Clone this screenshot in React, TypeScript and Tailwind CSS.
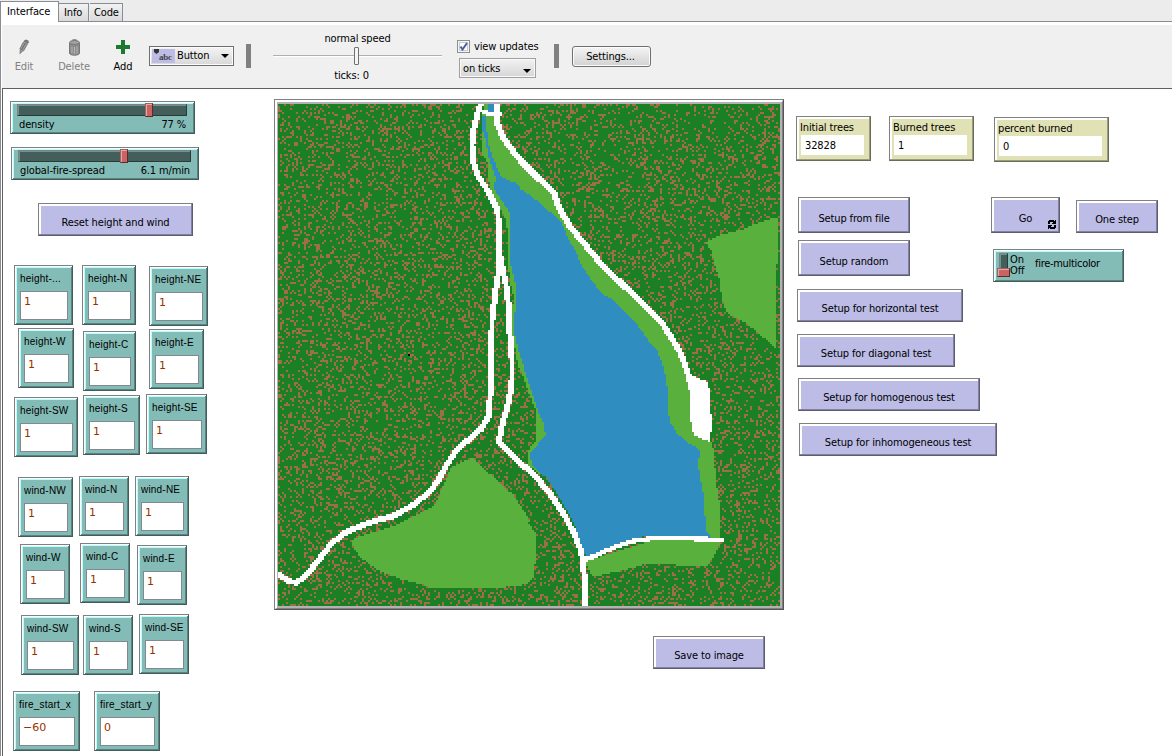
import React, { useMemo } from "react";

const UI = "font-['DejaVu_Sans_Condensed','DejaVu_Sans',sans-serif] text-[11px] leading-[14px] tracking-[-0.13px] whitespace-nowrap";

/* ---------- terrain ---------- */

type Pt = [number, number];
const SIZE = 251;

// Shapes are written on four overlapping sheets, six units to a patch.
const sheet = (ox: number, oy: number) => (...v: number[]): Pt[] => {
  const out: Pt[] = [];
  for (let i = 0; i < v.length; i += 2) out.push([(v[i] / 3 + ox) / 2, (v[i + 1] / 3 + oy) / 2]);
  return out;
};
const nw = sheet(-8, -9);
const ne = sheet(242, -9);
const sw = sheet(-8, 246);
const se = sheet(242, 246);

const GRASS: Pt[][] = [
  [
    ...nw(636, 60, 638, 100, 636, 180, 652, 200, 656, 250, 660, 285, 690, 335, 705, 370, 713, 410, 714, 510, 722, 570, 730, 600, 728, 650, 726, 720, 738, 770),
    ...se(-8, 40, 5, 70, 20, 110, 38, 160, 48, 180, 48, 270, 25, 300, 25, 345, 50, 366, 80, 380, 104, 410, 146, 480, 170, 530, 196, 605, 215, 612, 300, 576, 372, 557, 430, 552, 465, 552, 560, 558, 600, 570, 600, 465, 594, 430, 588, 400, 582, 310, 575, 275, 520, 240, 510, 75, 483, 0),
    ...ne(455, 730, 380, 640, 250, 515, 150, 395, 118, 340, 100, 290, 50, 245, 0, 195),
    ...nw(740, 175, 700, 130, 680, 80, 672, 60),
  ],
  se(195, 635, 400, 570, 600, 572, 600, 582, 565, 648, 480, 648, 460, 642, 380, 642, 320, 658, 235, 677, 215, 675),
  [
    ...sw(545, 350, 580, 335, 610, 322, 625, 340, 680, 390, 730, 435, 760, 480, 780, 515),
    ...se(25, 520, 45, 545, 48, 600, 42, 680, 20, 700, 0, 707),
    ...sw(740, 708, 690, 713, 480, 713, 460, 705, 400, 690, 340, 668, 300, 645, 270, 620, 250, 595, 246, 570, 280, 555, 360, 532, 430, 500, 490, 470, 510, 430, 525, 395),
  ],
  ne(757, 369, 774, 369, 774, 507, 768, 507, 768, 760, 745, 740, 680, 685, 622, 655, 605, 610, 600, 560, 585, 510, 575, 470, 557, 440, 600, 420, 670, 402, 710, 385),
  nw(642, 24, 654, 24, 654, 45, 642, 45),
];

const WATER: Pt[][] = [
  [
    ...nw(638, 63, 636, 100, 645, 130, 655, 180, 668, 220, 678, 250, 671, 280, 690, 310, 717, 350, 720, 400, 720, 500, 735, 560, 738, 600, 738, 640, 733, 660, 735, 720, 748, 775),
    ...se(0, 15, 20, 80, 40, 140, 60, 200, 72, 225, 76, 255, 60, 275, 30, 310, 35, 345, 80, 385, 110, 430, 140, 480, 165, 530, 190, 612, 205, 620, 250, 602, 310, 575, 370, 560, 550, 560, 575, 566, 560, 545, 553, 480, 550, 430, 540, 380, 535, 345, 540, 300, 500, 275, 470, 250, 450, 215, 444, 180, 443, 120, 435, 70, 425, 35, 410, 0),
    ...ne(390, 745, 365, 705, 320, 655, 275, 610, 245, 595, 215, 555, 185, 510, 165, 465, 145, 430, 125, 385, 95, 355, 55, 320, 0, 280),
    ...nw(745, 268, 715, 255, 692, 245, 680, 215, 670, 190, 655, 150, 650, 100, 648, 63),
  ],
  nw(654, 24, 672, 24, 672, 52, 654, 52),
];

const CLEARING: Pt[] = se(505, 72, 563, 95, 570, 130, 570, 190, 576, 195, 575, 230, 570, 275, 555, 270, 525, 255, 515, 235, 510, 190, 510, 135, 500, 90);

const ROADS: { r: number; p: Pt[] }[] = [
  {
    r: 1.45,
    p: [
      ...nw(634, 20, 625, 50, 612, 100, 606, 150, 610, 200, 625, 245, 655, 290, 683, 345, 686, 400, 689, 520, 682, 550, 674, 610, 666, 680, 665, 760),
      ...sw(663, 20, 660, 150, 655, 200, 635, 235, 600, 265, 560, 300, 530, 345, 508, 385, 480, 425, 430, 465, 370, 498, 300, 517, 230, 545, 185, 580, 150, 625, 110, 675, 80, 698, 58, 694, 20, 670),
    ],
  },
  {
    r: 1.45,
    p: [
      ...nw(689, 480, 700, 530, 710, 580, 716, 640, 717, 700, 724, 750),
      ...sw(726, 30, 726, 90, 722, 120, 710, 180, 695, 230, 687, 275, 720, 310),
      ...se(0, 338, 40, 372, 90, 430, 130, 490, 165, 555, 185, 610, 191, 660, 195, 700, 195, 790),
    ],
  },
  {
    r: 1.5,
    p: [
      ...nw(681, 20, 680, 80, 700, 130, 735, 175),
      ...ne(0, 195, 50, 245, 100, 290, 118, 340, 150, 395, 200, 455, 250, 515, 320, 580, 380, 640, 430, 690, 455, 730, 480, 770),
      ...se(497, 50, 508, 85),
    ],
  },
  { r: 1.1, p: nw(622, 42, 655, 56, 688, 58) },
  { r: 1.15, p: se(192, 632, 250, 605, 310, 582, 350, 571, 400, 565, 520, 566, 608, 570) },
];

function inside(x: number, y: number, p: Pt[]) {
  let hit = false;
  for (let i = 0, j = p.length - 1; i < p.length; j = i++) {
    if (p[i][1] > y !== p[j][1] > y && x < ((p[j][0] - p[i][0]) * (y - p[i][1])) / (p[j][1] - p[i][1]) + p[i][0]) hit = !hit;
  }
  return hit;
}

function near(x: number, y: number, p: Pt[], r: number) {
  for (let i = 1; i < p.length; i++) {
    const [ax, ay] = p[i - 1];
    const dx = p[i][0] - ax;
    const dy = p[i][1] - ay;
    const t = Math.max(0, Math.min(1, ((x - ax) * dx + (y - ay) * dy) / (dx * dx + dy * dy || 1)));
    if ((x - ax - t * dx) ** 2 + (y - ay - t * dy) ** 2 < r * r) return true;
  }
  return false;
}

const PALETTE = ["#1b7f23", "#9d6e48", "#59b03c", "#2f8dbf", "#ffffff"];

function buildTerrain() {
  const paths = PALETTE.map(() => "");
  let seed = 90210;
  const rand = () => {
    seed = (seed + 0x6d2b79f5) | 0;
    let t = Math.imul(seed ^ (seed >>> 15), 1 | seed);
    t = (t + Math.imul(t ^ (t >>> 7), 61 | t)) ^ t;
    return ((t ^ (t >>> 14)) >>> 0) / 4294967296;
  };
  for (let row = 0; row < SIZE; row++) {
    let start = 0;
    let prev = -1;
    for (let col = 0; col <= SIZE; col++) {
      let kind = -2;
      if (col < SIZE) {
        const x = col + 0.5;
        const y = row + 0.5;
        kind = rand() < 0.215 ? 1 : 0;
        if (ROADS.some((o) => near(x, y, o.p, o.r)) || inside(x, y, CLEARING)) kind = 4;
        else if (WATER.some((p) => inside(x, y, p))) kind = 3;
        else if (GRASS.some((p) => inside(x, y, p))) kind = 2;
      }
      if (kind !== prev) {
        if (prev > 0) paths[prev] += `M${start} ${row}h${col - start}v1h${start - col}z`;
        start = col;
        prev = kind;
      }
    }
  }
  return paths;
}

function World() {
  const paths = useMemo(buildTerrain, []);
  return (
    <svg width="502" height="502" viewBox="0 0 251 251" shapeRendering="crispEdges" className="block">
      <rect width="251" height="251" fill={PALETTE[0]} />
      {paths.map((d, i) => (d ? <path key={i} d={d} fill={PALETTE[i]} /> : null))}
      <rect x="65" y="125" width="1" height="1" fill="#000" />
    </svg>
  );
}

/* ---------- widgets ---------- */

const TEAL =
  "shrink-0 bg-[#83bbb6] border border-t-[#808080] border-l-[#808080] border-r-[#415c59] border-b-[#415c59] shadow-[inset_1px_1px_0_#fff,inset_-1px_-1px_0_#5a827e,inset_2px_2px_0_#b4ffff]";
const LILAC =
  "shrink-0 bg-[#bcbce6] border border-t-[#808080] border-l-[#808080] border-r-[#5c5c72] border-b-[#5c5c72] shadow-[inset_-1px_-1px_0_#8282a0,inset_2px_2px_0_#fff]";
const KHAKI =
  "shrink-0 bg-[#e0e1b4] border border-t-[#808080] border-l-[#808080] border-r-[#6c6c56] border-b-[#6c6c56] shadow-[inset_-1px_-1px_0_#9c9c7e,inset_2px_2px_0_#fff]";

function Btn({ at, children }: { at: string; children: React.ReactNode }) {
  return <button className={`${LILAC} ${UI} ${at} relative flex items-center justify-center pt-[7px] text-black`}>{children}</button>;
}

function Input({ at, label, value = "1" }: { at: string; label: string; value?: string }) {
  return (
    <div className={`${TEAL} ${at} flex h-[60px] flex-col pl-[5px] pr-1`}>
      <div className="mt-[7px] h-3 whitespace-nowrap font-['Liberation_Sans',sans-serif] text-[10px] leading-3 tracking-[0.2px] text-black">{label}</div>
      <div className="mt-[6px] h-[29px] border border-[#828790] bg-white pl-[3px] pt-[3px] font-['DejaVu_Sans',sans-serif] text-[11px] leading-[14px] text-[#963200]">{value}</div>
    </div>
  );
}

function Slider({ at, label, value, thumb }: { at: string; label: string; value: string; thumb: string }) {
  return (
    <div className={`${TEAL} ${UI} ${at} flex h-[33px] flex-col text-black`}>
      <div className="relative ml-[6px] mr-[7px] mt-[2px] h-3 border border-b-[#2a3a38] border-l-[#808080] border-r-[#2a3a38] border-t-[#808080] bg-[#445e5b] shadow-[inset_1px_1px_0_#6c9590]">
        <div className={`absolute -top-[2px] h-[14px] w-2 border border-b-[#5e2a2a] border-l-[#8a6a6a] border-r-[#5e2a2a] border-t-[#8a6a6a] bg-[#c86464] shadow-[inset_1px_1px_0_#ff9c9c] ${thumb}`} />
      </div>
      <div className="mt-[2px] flex justify-between pl-2 pr-2">
        <span>{label}</span>
        <span>{value}</span>
      </div>
    </div>
  );
}

function Monitor({ at, label, value }: { at: string; label: string; value: string }) {
  return (
    <div className={`${KHAKI} ${UI} ${at} flex h-[45px] flex-col pl-1 pr-[6px] text-black`}>
      <div className="mt-1 -ml-px h-[14px]">{label}</div>
      <div className="h-5 bg-white pl-1 pt-1">{value}</div>
    </div>
  );
}

/* ---------- toolbar ---------- */

function Pencil() {
  return (
    <svg width="12" height="17" viewBox="0 0 12 17" className="block">
      <path d="M6 1.5 8 .5l2.500 1 .3 2-1 1.500L5.500 2.800z" fill="#777" />
      <path d="M5.200 3.300 9.300 5.300 5.500 12 1.800 10z" fill="#999" stroke="#707070" strokeWidth=".8" />
      <path d="M7 4.500 3.500 11" stroke="#6a6a6a" strokeWidth="1" />
      <path d="M1.700 10.500 5 12.300 1.500 15.500z" fill="#888" />
    </svg>
  );
}

function Trash() {
  return (
    <svg width="13" height="17" viewBox="0 0 13 17" className="block">
      <path d="M4.500 1h4" stroke="#777" strokeWidth="1.500" />
      <path d="M1.500 4v10c0 3 10 3 10 0V4z" fill="#8c8c8c" stroke="#777" />
      <ellipse cx="6.500" cy="3.500" rx="5" ry="2" fill="#a2a2a2" stroke="#777" />
      <path d="M4 7.500v7M6.500 8v7M9 7.500v7" stroke="#b4b4b4" />
    </svg>
  );
}

function Arrow() {
  return (
    <svg width="8" height="4" viewBox="0 0 8 4" className="block">
      <path d="M0 0h8L4 4z" fill="#000" />
    </svg>
  );
}

function Tool({ at, label, children }: { at: string; label: string; children: React.ReactNode }) {
  return (
    <div className={`flex shrink-0 flex-col items-center pt-[14px] ${UI} ${at}`}>
      <div className="flex h-[19px] items-start justify-center">{children}</div>
      <span className="mt-[2px]">{label}</span>
    </div>
  );
}

function Toolbar() {
  return (
    <div className="ml-px flex h-[63px] shrink-0 items-start bg-[#f0f0f0] text-black">
      <Tool at="ml-[2px] w-10 text-[#808080]" label="Edit"><Pencil /></Tool>
      <Tool at="ml-[10px] w-10 text-[#808080]" label="Delete"><Trash /></Tool>
      <Tool at="ml-[9px] w-10" label="Add">
        <svg width="14" height="14" viewBox="0 0 14 14" className="mt-px block"><path d="M5 0h4v5h5v4H9v5H5V9H0V5h5z" fill="#1b7a30" /></svg>
      </Tool>
      <div className={`ml-[6px] mt-[21px] flex h-5 w-[85px] shrink-0 items-center border border-[#707070] bg-gradient-to-b from-[#f4f4f4] to-[#d8d8d8] pl-[2px] shadow-[inset_0_0_0_1px_#fbfbfb] ${UI}`}>
        <span className="flex h-[14px] w-[23px] items-end justify-end bg-[#bcbce6] pr-[3px] font-['Liberation_Serif',serif] text-[9px] font-bold leading-[11px] text-[#444]">
          <svg width="5" height="5" viewBox="0 0 5 5" className="mb-[9px]"><path d="M0 0h5v3L2.500 5 0 3z" fill="#333" /></svg>abc
        </span>
        <span className="ml-[2px] flex-1">Button</span>
        <span className="mr-[4px]"><Arrow /></span>
      </div>
      <div className="ml-3 mt-[19px] h-6 w-[5px] shrink-0 bg-[#808080]" />
      <div className={`ml-[22px] flex w-[169px] shrink-0 flex-col items-center pt-[7px] ${UI}`}>
        <span>normal speed</span>
        <div className="mt-px flex h-[18px] w-full items-center justify-center">
          <div className="h-[2px] w-[81px] border-b border-white bg-[#b0b0b0]" />
          <div className="h-[18px] w-[5px] rounded-[1px] border border-[#707070] bg-[#f4f4f4]" />
          <div className="h-[2px] w-[83px] border-b border-white bg-[#b0b0b0]" />
        </div>
        <span className="mr-3 mt-[4px]">ticks: 0</span>
      </div>
      <div className={`ml-[15px] flex w-[82px] shrink-0 flex-col ${UI}`}>
        <div className="mt-[15px] flex h-[13px] items-center">
          <span className="flex h-[13px] w-[13px] items-center justify-center border border-[#8e8f8f] bg-white shadow-[inset_0_0_0_1px_#f4f4f4,inset_0_0_0_2px_#c8ccd4]">
            <svg width="9" height="9" viewBox="0 0 9 9"><path d="M1.500 4.500 3.500 7.500 8 1" fill="none" stroke="#4a5f9c" strokeWidth="2" /></svg>
          </span>
          <span className="ml-1">view updates</span>
        </div>
        <div className="ml-[2px] mt-[5px] flex h-5 w-[77px] items-center border border-[#a0a0a0] bg-gradient-to-b from-[#f2f2f2] to-[#d6d6d6] pl-[3px] shadow-[inset_0_0_0_1px_#f8f8f8]">
          <span className="flex-1 pt-px">on ticks</span>
          <span className="mr-[4px] mt-[5px]"><Arrow /></span>
        </div>
      </div>
      <div className="ml-[15px] mt-[19px] h-6 w-[5px] shrink-0 bg-[#808080]" />
      <button className={`ml-[13px] mt-[21px] h-[21px] w-[79px] shrink-0 rounded-[3px] border border-[#707070] bg-gradient-to-b from-[#f4f4f4] to-[#d2d2d2] pr-[2px] shadow-[inset_0_0_0_1px_#fbfbfb] ${UI}`}>Settings...</button>
    </div>
  );
}

function Tabs() {
  return (
    <div className={`flex h-[22px] shrink-0 items-end bg-[#ececec] text-black ${UI}`}>
      <div className="z-10 h-[21px] w-[59px] shrink-0 border border-b-0 border-[#898c95] bg-white pl-[6px] pt-[3px]">Interface</div>
      <div className="flex h-[19px] flex-1 border-b border-[#898c95]">
        <div className="w-[30px] border border-b-0 border-l-0 border-[#898c95] bg-gradient-to-b from-[#f2f2f2] to-[#dadada] pl-[5px] pt-[2px]">Info</div>
        <div className="ml-px w-[33px] border border-b-0 border-l-0 border-[#898c95] bg-gradient-to-b from-[#f2f2f2] to-[#dadada] pl-1 pt-[2px]">Code</div>
      </div>
    </div>
  );
}

function LeftPanel() {
  return (
    <div className="w-[271px] shrink-0 pt-3">
      <Slider at="ml-[7px] w-[185px]" label="density" value="77 %" thumb="left-[127px]" />
      <Slider at="ml-2 mt-[13px] w-[188px]" label="global-fire-spread" value="6.1 m/min" thumb="left-[101px]" />
      <Btn at="ml-[35px] mt-[23px] h-[33px] w-[155px]">Reset height and wind</Btn>
      <div className="mt-[29px] flex h-[63px] items-start">
        <Input at="ml-[11px] w-[59px]" label="height-..." />
        <Input at="ml-[9px] w-[54px]" label="height-N" />
        <Input at="ml-[13px] mt-px w-[59px]" label="height-NE" />
      </div>
      <div className="flex h-[66px] items-start">
        <Input at="ml-[15px] w-[56px]" label="height-W" />
        <Input at="ml-[9px] mt-[3px] w-[53px]" label="height-C" />
        <Input at="ml-[13px] mt-px w-[55px]" label="height-E" />
      </div>
      <div className="flex h-[82px] items-start">
        <Input at="ml-[11px] mt-[3px] w-[64px]" label="height-SW" />
        <Input at="ml-[5px] mt-px w-[57px]" label="height-S" />
        <Input at="ml-[6px] w-[61px]" label="height-SE" />
      </div>
      <div className="flex h-[67px] items-start">
        <Input at="ml-[15px] mt-px w-[55px]" label="wind-NW" />
        <Input at="ml-[6px] w-[50px]" label="wind-N" />
        <Input at="ml-[6px] w-[54px]" label="wind-NE" />
      </div>
      <div className="flex h-[71px] items-start">
        <Input at="ml-[17px] mt-px w-[50px]" label="wind-W" />
        <Input at="ml-[10px] w-[50px]" label="wind-C" />
        <Input at="ml-[7px] mt-[2px] w-[50px]" label="wind-E" />
      </div>
      <div className="flex h-[77px] items-start">
        <Input at="ml-[18px] mt-px w-[58px]" label="wind-SW" />
        <Input at="ml-[4px] mt-px w-[50px]" label="wind-S" />
        <Input at="ml-[6px] w-[50px]" label="wind-SE" />
      </div>
      <div className="flex items-start">
        <Input at="ml-[10px] w-[67px]" label="fire_start_x" value="−60" />
        <Input at="ml-[14px] w-[66px]" label="fire_start_y" value="0" />
      </div>
    </div>
  );
}

function CenterPanel() {
  return (
    <div className="w-[510px] shrink-0 pt-[10px]">
      <div className="h-[511px] border border-b-[#555] border-l-[#808080] border-r-[#555] border-t-[#808080]">
        <div className="h-full border-b border-l-2 border-r border-t-2 border-b-[#808080] border-l-white border-r-[#808080] border-t-white">
          <div className="h-full border-b-2 border-l border-r-2 border-t-2 border-[#b2b2b2]">
            <World />
          </div>
        </div>
      </div>
      <Btn at="ml-[379px] mt-[26px] h-[33px] w-[112px]">Save to image</Btn>
    </div>
  );
}

function RightPanel() {
  return (
    <div className="flex-1 pt-[27px]">
      <div className="flex h-[46px] items-start">
        <Monitor at="ml-3 w-[75px]" label="Initial trees" value="32828" />
        <Monitor at="ml-[18px] w-[85px]" label="Burned trees" value="1" />
        <Monitor at="ml-5 mt-px w-[115px]" label="percent burned" value="0" />
      </div>
      <div className="flex items-start pt-[35px]">
        <div className="w-[207px] shrink-0">
          <Btn at="ml-[14px] h-9 w-[112px]">Setup from file</Btn>
          <Btn at="ml-[14px] mt-[7px] h-9 w-[112px]">Setup random</Btn>
          <Btn at="ml-[13px] mt-[13px] h-[33px] w-[166px]">Setup for horizontal test</Btn>
          <Btn at="ml-[13px] mt-3 h-[33px] w-[158px]">Setup for diagonal test</Btn>
          <Btn at="ml-[14px] mt-[11px] h-[33px] w-[182px]">Setup for homogenous test</Btn>
          <Btn at="ml-[15px] mt-3 h-[33px] w-[198px]">Setup for inhomogeneous test</Btn>
        </div>
        <div className="shrink-0">
          <div className="flex items-start">
            <Btn at="h-9 w-[69px]">
              Go
              <svg width="8" height="9" viewBox="0 0 8 9" shapeRendering="crispEdges" className="absolute bottom-[3px] right-[3px]">
                <path d="M1 0h5v1h1V0h1v4H4V3h1V2H2v2H0V1h1zM7 9H2V8H1v1H0V5h4v1H3v1h3V5h2v3H7z" fill="#000" />
              </svg>
            </Btn>
            <Btn at="ml-4 mt-[3px] h-[33px] w-[82px]">One step</Btn>
          </div>
          <div className={`${TEAL} ${UI} ml-[2px] mt-4 flex h-[33px] w-[131px] items-start text-black`}>
            <div className="ml-[3px] mt-[3px] flex w-[13px] flex-col items-center">
              <div className="h-[15px] w-[9px] border border-b-0 border-l-[#808080] border-r-[#2a3a38] border-t-[#808080] bg-[#445e5b] shadow-[inset_1px_1px_0_#6c9590]" />
              <div className="h-[9px] w-[13px] border border-b-[#5e2a2a] border-l-[#8a6a6a] border-r-[#5e2a2a] border-t-[#8a6a6a] bg-[#c86464] shadow-[inset_1px_1px_0_#ff9c9c]" />
            </div>
            <div className="mt-[4px] w-[25px] leading-[11px]">On<br />Off</div>
            <div className="mt-[7px] tracking-[-0.3px]">fire-multicolor</div>
          </div>
        </div>
      </div>
    </div>
  );
}

export default function App() {
  return (
    <div className="flex h-[756px] w-[1172px] flex-col overflow-hidden bg-white">
      <Tabs />
      <div className="flex flex-1 flex-col border-l border-[#898c95] pt-[3px]">
        <Toolbar />
        <div className="ml-px flex flex-1 items-start border-l border-t border-[#606060]">
          <LeftPanel />
          <CenterPanel />
          <RightPanel />
        </div>
      </div>
    </div>
  );
}
